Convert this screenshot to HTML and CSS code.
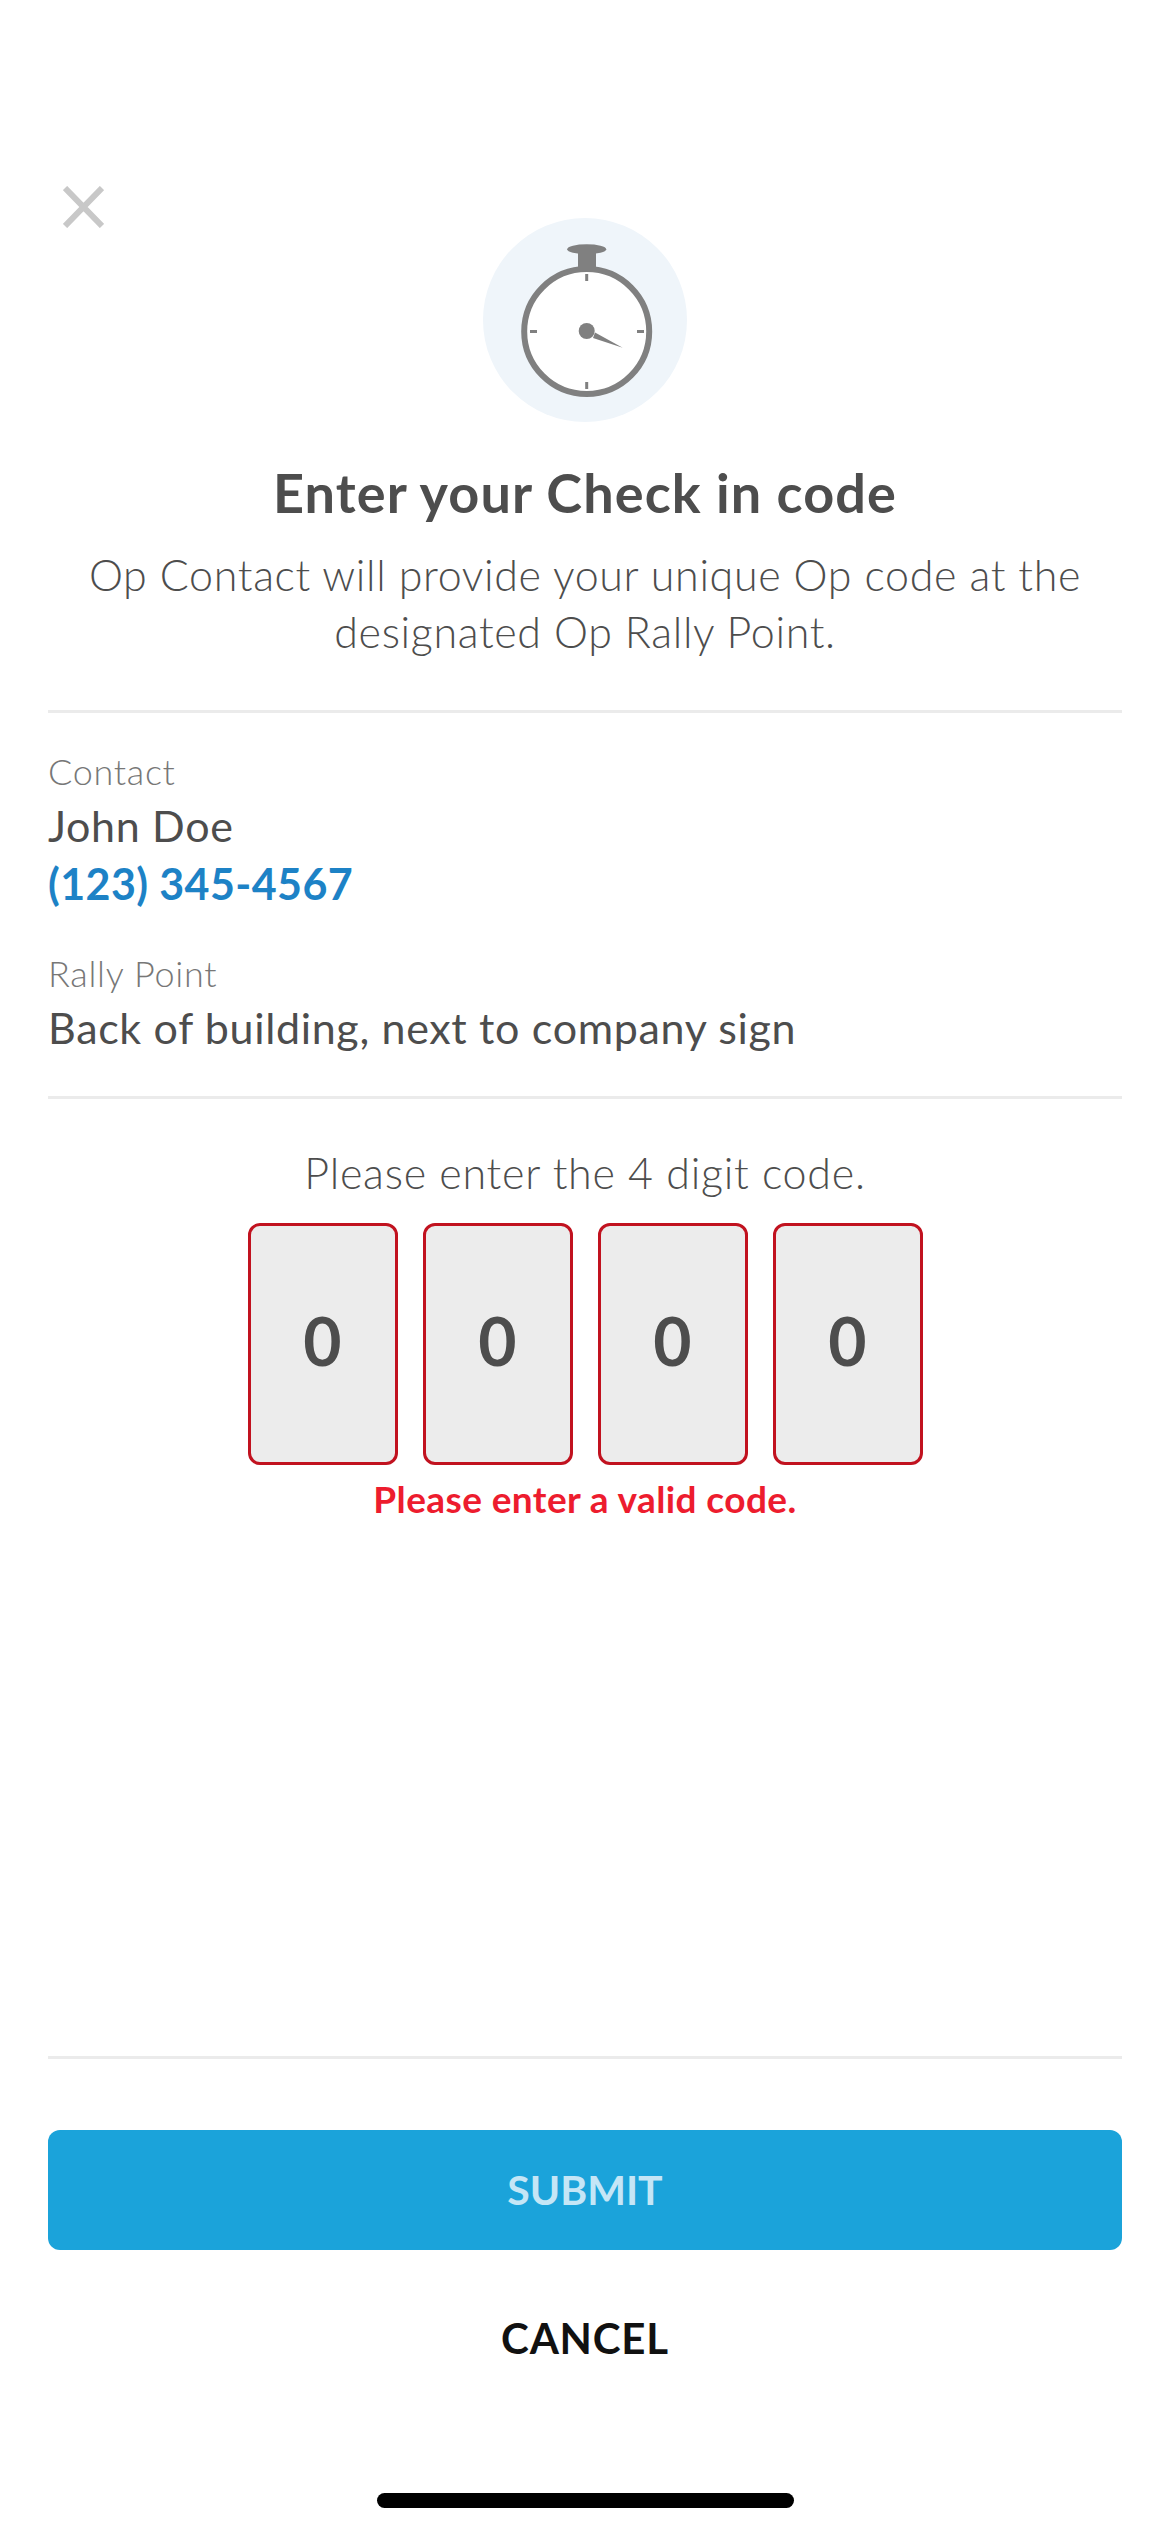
FILE: index.html
```html
<!DOCTYPE html>
<html lang="en">

<head>
    <meta charset="UTF-8">
    <link rel="stylesheet" href="styles.css">
</head>

<body>
    <div class="checkin-screen">
        <button class="close-button" aria-label="Close">
            <svg width="41" height="42" viewBox="0 0 41 42">
                <path d="M2 2 L39 40 M39 2 L2 40" fill="none" stroke="#c8c8c8" stroke-width="6" />
            </svg>
        </button>

        <div class="timer-badge">
            <svg width="204" height="204" viewBox="0 0 204 204">
                <circle cx="102" cy="102" r="102" fill="#eff5fa" />
                <ellipse cx="103.7" cy="31.3" rx="19.5" ry="5" fill="#808080" />
                <rect x="95" y="31" width="18" height="22" fill="#808080" />
                <circle cx="103.7" cy="113.5" r="62.5" fill="#fff" stroke="#808080" stroke-width="6" />
                <path d="M103.7 56 V63 M103.7 164 V171 M47 113.5 H54 M154 113.5 H161" stroke="#808080" stroke-width="3" />
                <circle cx="103.7" cy="113" r="8" fill="#808080" />
                <polygon points="112,114.5 139.7,129.7 110,120" fill="#808080" />
            </svg>
        </div>

        <h1 class="page-title">Enter your Check in code</h1>
        <p class="page-intro">Op Contact will provide your unique Op code at the designated Op Rally Point.</p>

        <div class="details">
            <div class="detail-group">
                <div class="detail-label">Contact</div>
                <div class="detail-value">John Doe</div>
                <a class="detail-phone">(123) 345-4567</a>
            </div>
            <div class="detail-group">
                <div class="detail-label">Rally Point</div>
                <div class="detail-value">Back of building, next to company sign</div>
            </div>
        </div>

        <div class="code-entry">
            <div class="code-prompt">Please enter the 4 digit code.</div>
            <div class="code-boxes">
                <div class="code-box">0</div>
                <div class="code-box">0</div>
                <div class="code-box">0</div>
                <div class="code-box">0</div>
            </div>
            <div class="code-error">Please enter a valid code.</div>
        </div>

        <div class="actions">
            <button class="submit-button">SUBMIT</button>
            <button class="cancel-button">CANCEL</button>
        </div>

        <div class="home-indicator"></div>
    </div>
</body>

</html>
```

FILE: styles.css
```css
* {
    box-sizing: border-box;
}

body {
    font-family: Lato, "Noto Sans", Arial, sans-serif;
    margin: 0;
    background-color: #fff;
    color: #4d4d4d;
}

.checkin-screen {
    position: relative;
    display: flex;
    flex-direction: column;
    height: 2532px;
    padding: 218px 48px 0;
    overflow: hidden;
}

.close-button {
    position: absolute;
    left: 63px;
    top: 186px;
    padding: 0;
    border: none;
    background: none;
    line-height: 0;
}

.timer-badge {
    align-self: center;
    width: 204px;
    height: 204px;
    line-height: 0;
}

.page-title {
    margin: 35px 0 0;
    text-align: center;
    font-size: 54px;
    line-height: 72px;
    font-weight: 700;
    letter-spacing: 1.1px;
}

.page-intro {
    margin: 17px 0 0;
    padding-bottom: 50px;
    border-bottom: 3px solid #ebebeb;
    text-align: center;
    font-size: 43px;
    line-height: 57px;
    font-weight: 300;
    letter-spacing: 0.65px;
}

.details {
    padding: 36px 0 39px;
    border-bottom: 3px solid #ebebeb;
}

.detail-group {
    margin-bottom: 38px;
}

.detail-group:last-child {
    margin-bottom: 0;
}

.detail-label {
    margin-bottom: 4px;
    font-size: 36px;
    line-height: 44px;
    font-weight: 300;
    letter-spacing: 0.7px;
    color: #777;
}

.detail-value {
    font-size: 43px;
    line-height: 58px;
    font-weight: 400;
    letter-spacing: 0.67px;
}

.detail-phone {
    display: block;
    font-size: 43px;
    line-height: 58px;
    font-weight: 700;
    letter-spacing: 0.4px;
    color: #1d82c6;
}

.code-entry {
    display: flex;
    flex-direction: column;
    align-items: center;
    padding-top: 45px;
}

.code-prompt {
    font-size: 43px;
    line-height: 58px;
    font-weight: 300;
    letter-spacing: 0.75px;
}

.code-boxes {
    display: flex;
    gap: 25px;
    margin-top: 21px;
}

.code-box {
    display: flex;
    align-items: center;
    justify-content: center;
    width: 150px;
    height: 242px;
    padding-bottom: 8px;
    background-color: #ececec;
    border: 3px solid #c1121f;
    border-radius: 12px;
    font-size: 66px;
    font-weight: 700;
}

.code-error {
    margin-top: 11px;
    font-size: 37px;
    line-height: 46px;
    font-weight: 700;
    letter-spacing: 0.4px;
    color: #ed1c2e;
}

.actions {
    margin-top: auto;
    padding-top: 71px;
    border-top: 3px solid #ebebeb;
}

.submit-button {
    display: block;
    width: 100%;
    height: 120px;
    padding-bottom: 2px;
    border: none;
    border-radius: 12px;
    background-color: #1ba3da;
    color: #c5e6f6;
    font-family: inherit;
    font-size: 41px;
    font-weight: 700;
}

.cancel-button {
    display: block;
    width: 100%;
    height: 58px;
    margin-top: 59px;
    padding: 0;
    border: none;
    background: none;
    color: #111;
    font-family: inherit;
    font-size: 42px;
    font-weight: 700;
    letter-spacing: 0.8px;
}

.home-indicator {
    align-self: center;
    flex-shrink: 0;
    width: 417px;
    height: 15px;
    margin: 126px 0 24px;
    border-radius: 8px;
    background-color: #000;
}
```
